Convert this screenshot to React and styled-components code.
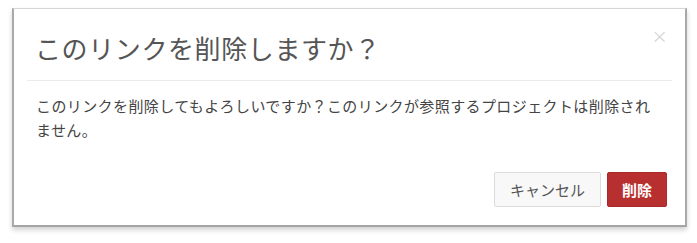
import React from "react";
import styled, { createGlobalStyle } from "styled-components";

const Global = createGlobalStyle`
  html, body { margin: 0; padding: 0; background: #ffffff; }
  body { font-family: "Noto Sans CJK JP", "Noto Sans", sans-serif; }
`;

const Page = styled.div`
  padding: 8px 0 0 12px;
  width: 697px;
  height: 243px;
  box-sizing: border-box;
`;

const Dialog = styled.div`
  width: 675px;
  box-sizing: border-box;
  background: #ffffff;
  border-top: 1px solid #d6d6d6;
  border-left: 2px solid #a9a9a9;
  border-right: 2px solid #a9a9a9;
  border-bottom: 2px solid #a4a4a4;
  box-shadow: 0 3px 5px rgba(0, 0, 0, 0.18);
  position: relative;
`;

const Header = styled.div`
  margin: 0 13px;
  padding: 24px 10px 17px 8px;
  border-bottom: 1px solid #ebebeb;
`;

const Title = styled.h4`
  margin: 0;
  font-size: 26px;
  line-height: 30px;
  letter-spacing: 0.6px;
  font-weight: 400;
  color: #555555;
`;

const Close = styled.span`
  position: absolute;
  top: 17px;
  right: 17px;
  font-size: 20px;
  line-height: 20px;
  color: #cfcfcf;
  font-family: "DejaVu Sans", sans-serif;
  font-weight: 300;
`;

const Body = styled.div`
  padding: 13px 10px 0 22px;
  font-size: 15px;
  line-height: 24px;
  letter-spacing: 0.4px;
  color: #444444;
  width: 657px;
  box-sizing: border-box;
`;

const Footer = styled.div`
  display: flex;
  justify-content: flex-end;
  gap: 6px;
  padding: 30px 18px 18px 0;
`;

const Button = styled.button`
  height: 35px;
  box-sizing: border-box;
  padding: 0 ${(p) => (p.$danger ? "14px" : "15px")};
  border-radius: 2px;
  font-family: "Noto Sans CJK JP", "Noto Sans", sans-serif;
  font-size: 15px;
  line-height: 1;
  font-weight: ${(p) => (p.$danger ? 700 : 400)};
  color: ${(p) => (p.$danger ? "#ffffff" : "#555555")};
  background: ${(p) => (p.$danger ? "#b82f2f" : "#f8f8f8")};
  border: 1px solid ${(p) => (p.$danger ? "#a82a2a" : "#dcdcdc")};
  cursor: pointer;
`;

export default function App() {
  return (
    <>
      <Global />
      <Page>
        <Dialog>
          <Close>×</Close>
          <Header>
            <Title>このリンクを削除しますか？</Title>
          </Header>
          <Body>
            このリンクを削除してもよろしいですか？このリンクが参照するプロジェクトは削除されません。
          </Body>
          <Footer>
            <Button>キャンセル</Button>
            <Button $danger>削除</Button>
          </Footer>
        </Dialog>
      </Page>
    </>
  );
}
